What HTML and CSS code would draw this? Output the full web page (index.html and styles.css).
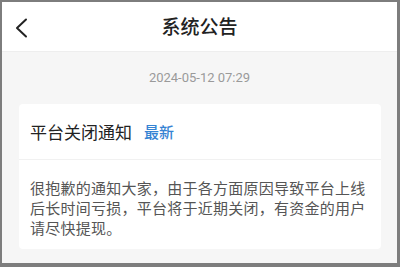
FILE: index.html
```html
<!DOCTYPE html>
<html lang="zh-CN">
<head>
    <meta charset="UTF-8">
    <meta name="viewport" content="width=device-width, initial-scale=1.0">
    <title>系统公告</title>
    <link rel="stylesheet" href="styles.css">
</head>
<body>
    <div class="screen">
        <div class="header">
            <span class="back">
                <svg width="14" height="20" viewBox="0 0 14 20">
                    <polyline points="12,1.5 3,10 12,18.5" fill="none" stroke="#222" stroke-width="2" stroke-linecap="round" stroke-linejoin="round"/>
                </svg>
            </span>
            <h1>系统公告</h1>
        </div>
        <div class="time">2024-05-12 07:29</div>
        <div class="card">
            <div class="card-title">
                <span class="name">平台关闭通知</span>
                <span class="tag">最新</span>
            </div>
            <div class="card-body">
                很抱歉的通知大家，由于各方面原因导致平台上线后长时间亏损，平台将于近期关闭，有资金的用户请尽快提现。
            </div>
        </div>
    </div>
</body>
</html>
```

FILE: styles.css
```css
*{
    margin: 0;
    padding: 0;
    box-sizing: border-box;
}
body{
    font-family: "Noto Sans CJK SC", "Noto Sans", sans-serif;
}
.screen{
    width: 400px;
    height: 267px;
    border-style: solid;
    border-color: #7d7d7d;
    border-width: 2px 3px 4px 2px;
    background-color: #f6f6f6;
    overflow: hidden;
}
.header{
    height: 50px;
    background-color: #fff;
    border-bottom: 1px solid #eeeeee;
    position: relative;
    display: flex;
    align-items: center;
    justify-content: center;
}
.header h1{
    font-size: 19px;
    font-weight: 500;
    color: #222;
    margin-top: -2px;
}
.back{
    position: absolute;
    left: 12px;
    top: 16px;
    display: flex;
}
.time{
    height: 52px;
    line-height: 52px;
    text-align: center;
    font-family: Roboto, "Noto Sans", sans-serif;
    font-size: 13px;
    color: #9a9a9a;
}
.card{
    margin: 0 16px 0 17px;
    background-color: #fff;
    border-radius: 4px;
}
.card-title{
    height: 56px;
    display: flex;
    align-items: center;
    padding: 0 11px;
    border-bottom: 1px solid #f1f1f1;
}
.card-title .name{
    font-size: 17px;
    color: #222;
}
.card-title .tag{
    font-size: 15px;
    font-weight: 500;
    color: #3583d3;
    margin-left: 12px;
}
.card-body{
    padding: 18px 11px 11px;
    font-size: 15px;
    line-height: 20px;
    letter-spacing: 0.25px;
    color: #555;
}
```
